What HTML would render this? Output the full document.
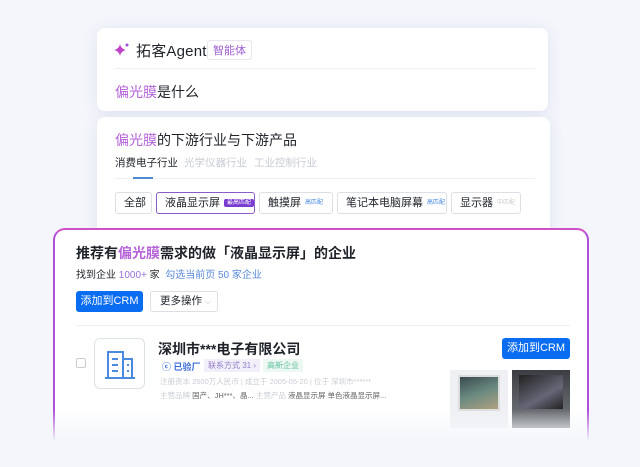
<!DOCTYPE html>
<html><head><meta charset="utf-8"><style>
*{margin:0;padding:0;box-sizing:border-box}
body{width:640px;height:467px;overflow:hidden;background:#f4f6fb;font-family:"Liberation Sans","Noto Sans CJK SC",sans-serif;position:relative;color:#1f2329}
.a{position:absolute}
.card{position:absolute;background:#fff;border-radius:8px;box-shadow:0 2px 16px rgba(150,160,200,.2)}
.p{color:#b563d8}
.tag{position:absolute;height:22px;border:1px solid #dcdfe6;border-radius:3px;font-size:11px;line-height:20px;padding:0 8px;background:#fff;white-space:nowrap}
.tag i{font-style:normal;font-size:6px;margin-left:4px;vertical-align:middle}
.btn{position:absolute;background:#0a6cf0;color:#fff;border-radius:3px;font-size:11px;text-align:center}
</style></head><body>
<div class="card" style="left:97px;top:28px;width:451px;height:83px"></div>
<svg class="a" style="left:114px;top:42px" width="16" height="16" viewBox="0 0 16 16"><path d="M6 2 Q7 7 12 8 Q7 9 6 14 Q5 9 0 8 Q5 7 6 2Z" fill="#c040c8"/><circle cx="13" cy="3" r="1.5" fill="#9a50d8"/></svg>
<div class="a" style="left:136px;top:40px;font-size:15px;letter-spacing:0.2px">拓客Agent</div>
<div class="a" style="left:207px;top:40px;border:1px solid #e8e4f0;border-radius:3px;font-size:11px;color:#a060d0;padding:1px 5px">智能体</div>
<div class="a" style="left:115px;top:68px;width:420px;border-top:1px solid #eef0f4"></div>
<div class="a" style="left:115px;top:82px;font-size:14px"><span class="p">偏光膜</span>是什么</div>

<div class="card" style="left:97px;top:117px;width:453px;height:150px"></div>
<div class="a" style="left:115px;top:130px;font-size:14px"><span class="p">偏光膜</span>的下游行业与下游产品</div>
<div class="a" style="left:115px;top:155px;font-size:10.5px">消费电子行业</div>
<div class="a" style="left:184px;top:155px;font-size:10.5px;color:#c8ccd4">光学仪器行业</div>
<div class="a" style="left:254px;top:155px;font-size:10.5px;color:#c8ccd4">工业控制行业</div>
<div class="a" style="left:115px;top:178px;width:420px;border-top:1px solid #eef0f4"></div>
<div class="a" style="left:133px;top:177px;width:20px;height:2px;background:#4a8ad0"></div>
<div class="tag" style="left:115px;top:192px;width:37px">全部</div>
<div class="tag" style="left:156px;top:192px;width:99px;border-color:#8a5cc8">液晶显示屏<i style="background:#7a3cd0;color:#fff;padding:1px 3px;border-radius:2px">最高匹配</i></div>
<div class="tag" style="left:259px;top:192px;width:74px">触摸屏<i style="color:#4a8ae0">高匹配</i></div>
<div class="tag" style="left:337px;top:192px;width:110px">笔记本电脑屏幕<i style="color:#4a8ae0">高匹配</i></div>
<div class="tag" style="left:451px;top:192px;width:70px">显示器<i style="color:#ccc">中匹配</i></div>

<div class="a" style="left:53px;top:228px;width:536px;height:220px;border-radius:12px;border:2px solid #d050c8;border-bottom:none;border-left-color:#b050d8;border-right-color:#b050d8;background:#fff"></div>
<div class="a" style="left:76px;top:243px;font-size:14px;font-weight:bold">推荐有<span class="p">偏光膜</span>需求的做「液晶显示屏」的企业</div>
<div class="a" style="left:76px;top:266px;font-size:10px">找到企业 <span style="color:#9a70d8">1000+</span> 家 &nbsp;<span style="color:#5a8ad8">勾选当前页 50 家企业</span></div>
<div class="btn" style="left:76px;top:291px;width:67px;height:21px;line-height:21px">添加到CRM</div>
<div class="a" style="left:150px;top:291px;width:68px;height:21px;border:1px solid #dcdfe6;border-radius:3px;font-size:10.5px;line-height:19px;padding-left:9px">更多操作 <span style="color:#bbb;font-size:8px">⌵</span></div>
<div class="a" style="left:76px;top:325px;width:494px;border-top:1px solid #eef0f4"></div>
<div class="a" style="left:76px;top:358px;width:10px;height:10px;border:1px solid #ccc;border-radius:2px"></div>
<div class="a" style="left:94px;top:338px;width:51px;height:51px;border:1px solid #dde1e8;border-radius:6px"></div>
<svg class="a" style="left:103px;top:347px" width="34" height="33" viewBox="0 0 34 33" fill="none" stroke="#4a8ae0" stroke-width="2"><path d="M2 31H32M5 31V5H20V31M20 12H29V31M9 12H15M9 18H15M9 24H15M24 18H26M24 24H26"/></svg>
<div class="a" style="left:158px;top:339px;font-size:14px;font-weight:bold">深圳市***电子有限公司</div>
<div class="a" style="left:162px;top:360px;font-size:9px;color:#3a6ad8;font-weight:bold">ⓒ 已验厂</div>
<div class="a" style="left:204px;top:359px;font-size:8px;color:#9080c8;background:#f3effa;padding:1px 4px">联系方式 31 ›</div>
<div class="a" style="left:263px;top:359px;font-size:8px;color:#60c0a0;background:#eef8f3;padding:1px 4px">高新企业</div>
<div class="a" style="left:160px;top:376px;font-size:7.5px;color:#c8ccd4">注册资本 2500万人民币 | 成立于 2005-05-20 | 位于 深圳市******</div>
<div class="a" style="left:160px;top:390px;font-size:7.5px;color:#c8ccd4">主营品牌 <span style="color:#666">国产、JH***、晶...</span> 主营产品 <span style="color:#666">液晶显示屏 单色液晶显示屏...</span></div>
<div class="btn" style="left:502px;top:338px;width:68px;height:21px;line-height:21px">添加到CRM</div>
<div class="a" style="left:450px;top:370px;width:58px;height:58px;background:#eef0f3"></div>
<div class="a" style="left:458px;top:375px;width:42px;height:36px;background:linear-gradient(160deg,#3a4a50,#6a8a80 50%,#b0a080);border:2px solid #ddd"></div>
<div class="a" style="left:512px;top:370px;width:58px;height:58px;background:linear-gradient(#3a3d42,#7a7d82)"></div>
<div class="a" style="left:519px;top:375px;width:44px;height:34px;background:linear-gradient(150deg,#222,#667 60%,#222)"></div>
<div class="a" style="left:0;top:410px;width:640px;height:57px;background:linear-gradient(rgba(244,246,251,0),#f4f6fb 55%)"></div>
</body></html>
